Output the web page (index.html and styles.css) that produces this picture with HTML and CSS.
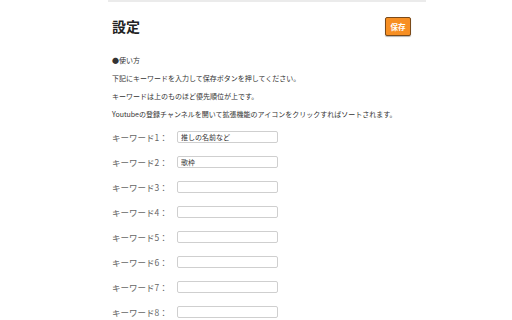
FILE: index.html
```html
<!DOCTYPE html>
<html lang="ja">
<head>
<meta charset="utf-8">
<title>設定</title>
<link rel="stylesheet" href="styles.css">
</head>
<body>
<div class="page">
  <div class="topline"></div>
  <div class="header">
    <h1 class="title">設定</h1>
    <button class="save">保存</button>
  </div>
  <div class="help">
    <p>●使い方</p>
    <p>下記にキーワードを入力して保存ボタンを押してください。</p>
    <p>キーワードは上のものほど優先順位が上です。</p>
    <p>Youtubeの登録チャンネルを開いて拡張機能のアイコンをクリックすればソートされます。</p>
  </div>
  <div class="rows">
    <div class="row"><label class="label">キーワード1：</label><input class="field" value="推しの名前など"></div>
    <div class="row"><label class="label">キーワード2：</label><input class="field" value="歌枠"></div>
    <div class="row"><label class="label">キーワード3：</label><input class="field" value=""></div>
    <div class="row"><label class="label">キーワード4：</label><input class="field" value=""></div>
    <div class="row"><label class="label">キーワード5：</label><input class="field" value=""></div>
    <div class="row"><label class="label">キーワード6：</label><input class="field" value=""></div>
    <div class="row"><label class="label">キーワード7：</label><input class="field" value=""></div>
    <div class="row"><label class="label">キーワード8：</label><input class="field" value=""></div>
  </div>
</div>
</body>
</html>
```
FILE: styles.css
```css
html, body {
  margin: 0;
  padding: 0;
  background: #fff;
  font-family: "Noto Sans CJK JP", "Noto Sans", sans-serif;
  overflow: hidden;
}
.page {
  width: 318px;
  margin-left: 108px;
}
.topline {
  height: 2px;
  background: #ebebeb;
}
.header {
  display: flex;
  justify-content: space-between;
  align-items: center;
  padding: 15px 15px 0 4px;
  height: 19px;
}
.title {
  margin: 0;
  font-size: 14px;
  font-weight: bold;
  color: #222;
  line-height: 19px;
}
.save {
  width: 26px;
  height: 19px;
  padding: 0;
  background: #f78f23;
  border: 1px solid #7a4a1a;
  border-radius: 2px;
  color: #fff;
  font-family: inherit;
  font-size: 7.5px;
  font-weight: bold;
  box-shadow: 0 1px 1px rgba(0,0,0,0.3);
}
.help {
  margin-top: 15px;
  padding-left: 4px;
}
.help p {
  margin: 0;
  height: 18px;
  line-height: 18px;
  font-size: 7px;
  color: #333;
  white-space: nowrap;
}
.rows {
  margin-top: 1px;
  padding-left: 4px;
}
.row {
  display: flex;
  align-items: center;
  height: 25px;
}
.label {
  width: 65px;
  font-size: 8.5px;
  color: #666;
  white-space: nowrap;
}
.field {
  box-sizing: border-box;
  width: 101px;
  height: 12px;
  padding: 0 3px;
  border: 1px solid #cfcfcf;
  border-radius: 2px;
  font-family: inherit;
  font-size: 7px;
  color: #333;
  outline: none;
}
```
